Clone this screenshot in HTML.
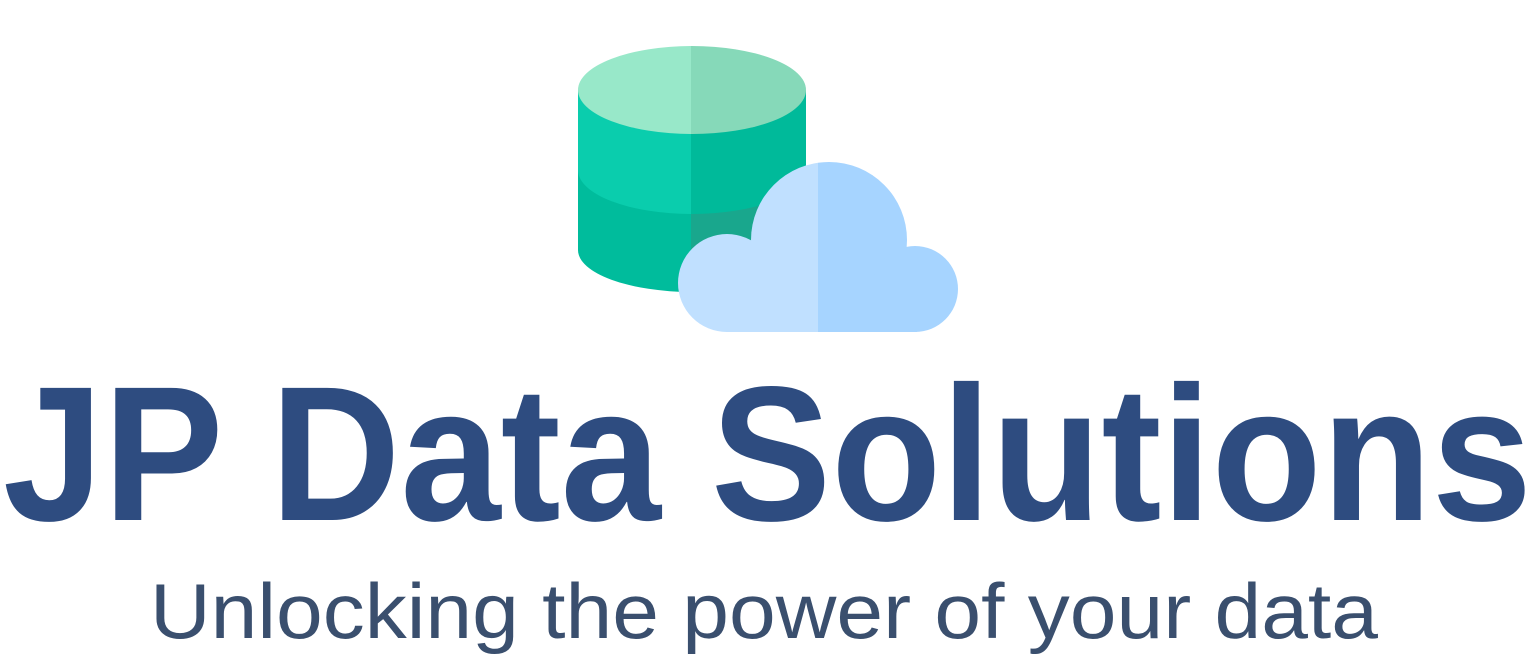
<!DOCTYPE html>
<html><head><meta charset="utf-8"><style>
html,body{margin:0;padding:0;background:#fff;width:1539px;height:663px;overflow:hidden}
svg{display:block}
</style></head><body>
<svg width="1539" height="663" viewBox="0 0 1539 663" xmlns="http://www.w3.org/2000/svg">
<defs>
<clipPath id="L"><rect x="0" y="0" width="691" height="663"/></clipPath>
<clipPath id="R"><rect x="691" y="0" width="848" height="663"/></clipPath>
<clipPath id="CL"><rect x="0" y="0" width="818" height="663"/></clipPath>
<clipPath id="CR"><rect x="818" y="0" width="721" height="663"/></clipPath>
</defs>
<g clip-path="url(#L)">
<path d="M578 170 L578 250 A114 42 0 0 0 806 250 L806 170 Z" fill="#00BC9C"/>
<path d="M578 90 L578 170 A114 44 0 0 0 806 170 L806 90 Z" fill="#0ACDAD"/>
<ellipse cx="692" cy="90" rx="114" ry="44" fill="#98E8C9"/>
</g>
<g clip-path="url(#R)">
<path d="M578 170 L578 250 A114 42 0 0 0 806 250 L806 170 Z" fill="#19A78D"/>
<path d="M578 90 L578 170 A114 44 0 0 0 806 170 L806 90 Z" fill="#00BA9A"/>
<ellipse cx="692" cy="90" rx="114" ry="44" fill="#86D9B9"/>
</g>
<g clip-path="url(#CL)" fill="#C0E0FF">
<circle cx="829" cy="240" r="78"/>
<circle cx="727" cy="283" r="49"/>
<circle cx="915" cy="289" r="43"/>
<rect x="727" y="280" width="190" height="52"/>
</g>
<g clip-path="url(#CR)" fill="#A6D4FF">
<circle cx="829" cy="240" r="78"/>
<circle cx="915" cy="289" r="43"/>
<rect x="727" y="280" width="190" height="52"/>
</g>
<text x="3" y="520" textLength="1529" lengthAdjust="spacingAndGlyphs" font-family="Liberation Sans, sans-serif" font-weight="bold" font-size="192" fill="#2E4C80">JP Data Solutions</text>
<text x="150" y="638" textLength="1228" lengthAdjust="spacingAndGlyphs" font-family="Liberation Sans, sans-serif" font-size="78" fill="#3A4F6E">Unlocking the power of your data</text>
</svg>
</body></html>
